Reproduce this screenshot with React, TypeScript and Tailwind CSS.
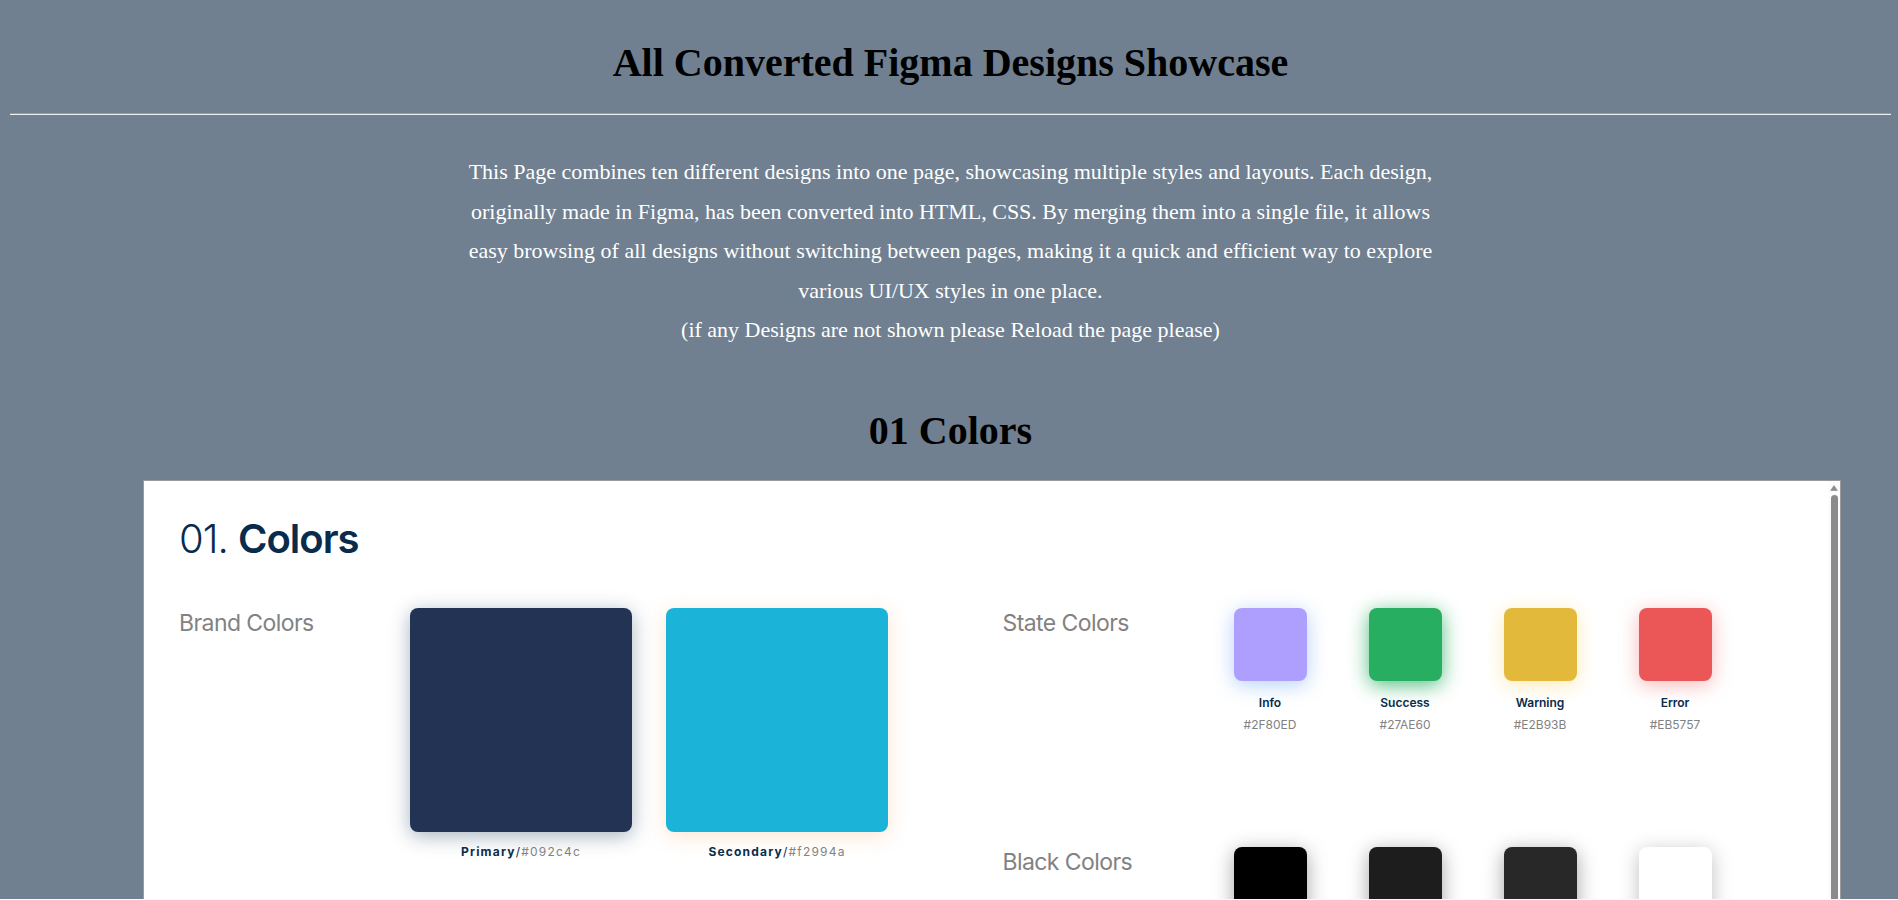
type Swatch = { id: string; name?: string; hex?: string; box: string };

const BRAND: Swatch[] = [
  { id: "primary", name: "Primary", hex: "#092c4c", box: "bg-[#223353] shadow-[0_4px_20px_rgba(9,44,76,0.36)]" },
  { id: "secondary", name: "Secondary", hex: "#f2994a", box: "bg-[#1bb3d8] shadow-[0_4px_20px_rgba(242,153,74,0.25)]" },
];

const STATE: Swatch[] = [
  { id: "info", name: "Info", hex: "#2F80ED", box: "bg-[#ae9fff] shadow-[0_4px_20px_rgba(47,128,237,0.36)]" },
  { id: "success", name: "Success", hex: "#27AE60", box: "bg-[#27ae60] shadow-[0_4px_20px_rgba(39,174,96,0.8)]" },
  { id: "warning", name: "Warning", hex: "#E2B93B", box: "bg-[#e2b93b] shadow-[0_4px_20px_rgba(242,201,76,0.4)]" },
  { id: "error", name: "Error", hex: "#EB5757", box: "bg-[#eb5757] shadow-[0_4px_20px_rgba(235,87,87,0.42)]" },
];

const BLACK: Swatch[] = [
  { id: "black-1", box: "bg-black shadow-[0_4px_20px_rgba(0,0,0,0.36)]" },
  { id: "black-2", box: "bg-[#1d1d1d] shadow-[0_4px_20px_rgba(0,0,0,0.36)]" },
  { id: "black-3", box: "bg-[#282828] shadow-[0_4px_20px_rgba(0,0,0,0.36)]" },
  { id: "white", box: "bg-white shadow-[0_4px_20px_rgba(0,0,0,0.25)]" },
];

function GroupTitle({ children }: { children: string }) {
  return <h3 className="shrink-0 text-[23px] leading-[30px] tracking-tight text-[#828282]">{children}</h3>;
}

function SmallGroup({ title, swatches }: { title: string; swatches: Swatch[] }) {
  return (
    <section className="flex h-[239px] items-start">
      <div className="w-[231px] shrink-0">
        <GroupTitle>{title}</GroupTitle>
      </div>
      <ul className="flex gap-[62px]">
        {swatches.map((s) => (
          <li key={s.id} className="flex w-[73px] flex-col items-center text-xs">
            <div className={`h-[73px] w-[73px] rounded-lg ${s.box}`} />
            {s.name && <span className="mt-[11px] leading-[22px] font-semibold text-[#092c4c]">{s.name}</span>}
            {s.hex && <span className="leading-[22px] text-[#828282]">{s.hex}</span>}
          </li>
        ))}
      </ul>
    </section>
  );
}

function ScrollBar() {
  return (
    <div className="flex w-3 shrink-0 flex-col items-center bg-[#fcfcfc] pt-1" aria-hidden="true">
      <svg className="h-[6px] w-[8px]" viewBox="0 0 8 6">
        <path d="M4 .5 7.4 5.5H.6Z" fill="#8b8b8b" stroke="#8b8b8b" strokeWidth=".6" strokeLinejoin="round" />
      </svg>
      <div className="mt-1 w-[7px] flex-1 rounded-full bg-[#8b8b8b]" />
    </div>
  );
}

export default function App() {
  return (
    <main className="h-screen overflow-hidden border-b border-[#fafafa] bg-[#708090] font-['Liberation_Serif',serif]">
      <header className="mr-[7px] ml-[10px] text-center">
        <h1 className="pt-10 text-[40px] leading-[46px] font-bold text-black">All Converted Figma Designs Showcase</h1>
        <hr className="mt-[27px] h-[2px] border-t border-b border-t-[#9a9a9a] border-b-[#eeeeee]" />
        <p className="mx-auto mt-[37px] max-w-[1000px] text-[22px] leading-[1.8] text-white">
          This Page combines ten different designs into one page, showcasing multiple styles and layouts. Each design,
          originally made in Figma, has been converted into HTML, CSS. By merging them into a single file, it allows
          easy browsing of all designs without switching between pages, making it a quick and efficient way to explore
          various UI/UX styles in one place.
          <br />
          (if any Designs are not shown please Reload the page please)
        </p>
      </header>

      <h2 className="mt-[58px] mr-[7px] ml-[10px] text-center text-[40px] leading-[46px] font-bold text-black">
        01 Colors
      </h2>

      <div className="mt-[26px] mr-[57px] ml-[143px] flex h-[800px] border border-[#9a9a9a] bg-white font-['Inter',sans-serif]">
        <div className="min-w-0 flex-1 overflow-hidden pt-[30px] pr-0.5 pl-[35px]">
          <h2 className="text-[40px] leading-[56px] font-light tracking-tight text-[#092c4c]">
            01. <span className="font-semibold">Colors</span>
          </h2>
          <div className="mt-[41px] grid grid-cols-2">
            <section className="flex items-start">
              <div className="w-[231px] shrink-0">
                <GroupTitle>Brand Colors</GroupTitle>
              </div>
              <ul className="flex gap-[34px]">
                {BRAND.map((s) => (
                  <li key={s.id} className="flex w-[222px] flex-col items-center text-xs">
                    <div className={`h-[224px] w-[222px] rounded-lg ${s.box}`} />
                    <p className="mt-2 leading-6 tracking-widest text-[#828282]">
                      <span className="font-bold text-[#092c4c]">{s.name}</span>
                      <span className="text-[#092c4c]">/</span>
                      {s.hex}
                    </p>
                  </li>
                ))}
              </ul>
            </section>
            <div>
              <SmallGroup title="State Colors" swatches={STATE} />
              <SmallGroup title="Black Colors" swatches={BLACK} />
            </div>
          </div>
        </div>
        <ScrollBar />
      </div>
    </main>
  );
}
